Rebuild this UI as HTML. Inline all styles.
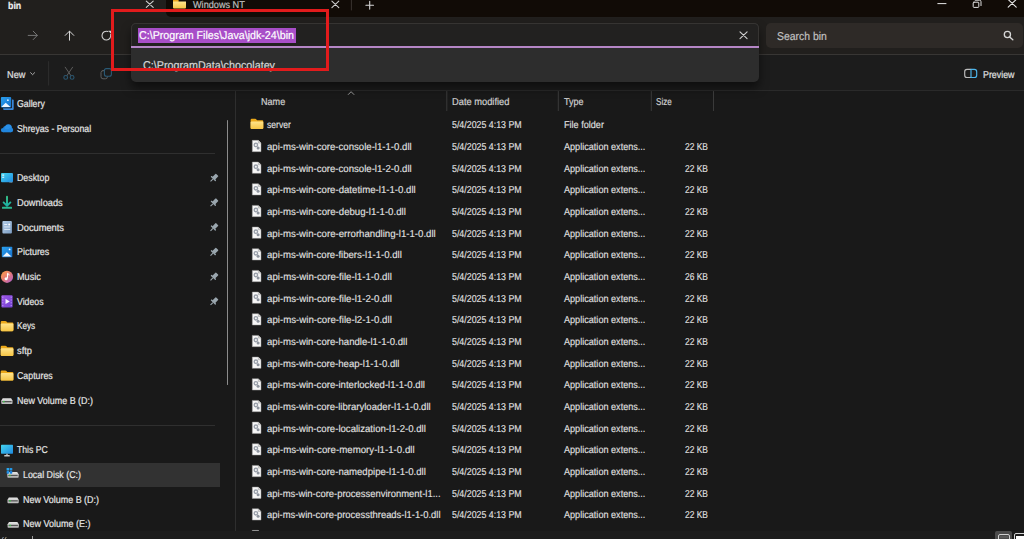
<!DOCTYPE html>
<html><head><meta charset="utf-8"><title>bin - File Explorer</title>
<style>
html,body{margin:0;padding:0;width:1024px;height:539px;overflow:hidden;background:#191919;}
body{position:relative;font-family:"Liberation Sans",sans-serif;}
.a{position:absolute;}
.t{position:absolute;line-height:12px;text-rendering:geometricPrecision;-webkit-text-stroke:0.2px currentColor;white-space:pre;transform-origin:0 0;font-family:"Liberation Sans",sans-serif;}
svg{position:absolute;left:0;top:0;overflow:visible;}
</style></head><body>
<!-- nav bar background (active tab + nav) -->
<div class="a" style="left:0;top:0;width:1024px;height:54px;background:#211f1d;"></div>
<!-- title bar dark region with flare -->
<div class="a" style="left:166px;top:0;width:858px;height:16.7px;background:#110b06;border-bottom-left-radius:5px;"></div>
<!-- nav separator -->
<div class="a" style="left:0;top:54px;width:1024px;height:1px;background:#383634;"></div>
<!-- toolbar -->
<div class="a" style="left:0;top:55px;width:1024px;height:35px;background:#1c1c1c;"></div>
<div class="a" style="left:0;top:90px;width:1024px;height:1px;background:#2a2a2a;"></div>
<!-- content bg -->
<div class="a" style="left:0;top:91px;width:1024px;height:440px;background:#191919;"></div>
<!-- sidebar border -->
<div class="a" style="left:235px;top:91px;width:1px;height:440px;background:#2e2e2e;"></div>
<!-- sidebar separators -->
<div class="a" style="left:0;top:152.8px;width:214.5px;height:1px;background:#2f2f2f;"></div>
<div class="a" style="left:0;top:425px;width:214.5px;height:1px;background:#2f2f2f;"></div>
<!-- sidebar scrollbar -->
<div class="a" style="left:226.8px;top:120.2px;width:1.4px;height:264.5px;background:#8c8c8c;border-radius:1px;"></div>
<!-- selected row -->
<div class="a" style="left:0;top:462.8px;width:220px;height:23.8px;background:#323232;"></div>

<!-- address box -->
<div class="a" style="left:131px;top:23px;width:627.5px;height:58.8px;background:#2d2d2d;border-radius:5px;box-shadow:0 6px 10px rgba(0,0,0,0.5);"></div>
<div class="a" style="left:131px;top:23px;width:625.5px;height:23px;background:#222120;border:1px solid #363432;border-bottom:none;border-radius:5px 5px 0 0;"></div>
<div class="a" style="left:131px;top:46px;width:627.5px;height:1.5px;background:#b586c6;"></div>
<div class="a" style="left:138.4px;top:27.9px;width:157.2px;height:14.7px;background:#a84ec8;"></div>
<!-- search box -->
<div class="a" style="left:765.5px;top:23.2px;width:257.7px;height:24.5px;background:#2e2a27;border-radius:5px;"></div>


<svg width="1024" height="539" viewBox="0 0 1024 539">
 <g fill="none" stroke-linecap="round" stroke-linejoin="round">
  <!-- tab close -->
  <path d="M146.3 1.1 L153.2 7.4 M153.2 1.1 L146.3 7.4" stroke="#d2d2d2" stroke-width="1.1"/>
  <path d="M331.9 1.2 L338.8 7.6 M338.8 1.2 L331.9 7.6" stroke="#cfcfcf" stroke-width="1.1"/>
  <path d="M351.4 0 L351.4 10" stroke="#3a3330" stroke-width="1"/>
  <path d="M365.9 5.2 L373.5 5.2 M369.7 1.2 L369.7 9.1" stroke="#d6d6d6" stroke-width="1.1"/>
  <!-- window controls -->
  <path d="M937.8 3.6 L946 3.6" stroke="#e6e6e6" stroke-width="1"/>
  <rect x="973.2" y="2.2" width="5.6" height="5.2" rx="0.8" stroke="#e0e0e0" stroke-width="1"/>
  <path d="M975.2 0.2 L979.5 0.2 Q981 0.2 981 1.7 L981 5.6" stroke="#e0e0e0" stroke-width="1"/>
  <path d="M1008.2 -0.5 L1016.2 7.2 M1016.2 -0.5 L1008.2 7.2" stroke="#e6e6e6" stroke-width="1.1"/>
  <!-- nav arrows -->
  <path d="M28.2 35.4 L37.2 35.4 M33.2 31.2 L37.3 35.4 L33.2 39.6" stroke="#767676" stroke-width="1"/>
  <path d="M69.5 31.2 L69.5 40.2 M65.2 35.4 L69.5 31.1 L73.8 35.4" stroke="#d8d8d8" stroke-width="1"/>
  <path d="M110.65 34.46 A4.4 4.4 0 1 1 107.9 31.47" stroke="#d0d0d0" stroke-width="1.1"/>
  <path d="M108.2 30.8 L111.2 30.8 L111.2 33.9 Z" fill="#d8d8d8" stroke="none"/>
  <!-- address clear -->
  <path d="M740 31.8 L747.1 38.7 M747.1 31.8 L740 38.7" stroke="#d2d2d2" stroke-width="1.1"/>
  <!-- search icon -->
  <circle cx="1007.4" cy="34.5" r="3.1" stroke="#d6d6d6" stroke-width="1.3"/>
  <path d="M1009.7 36.9 L1012.8 39.7" stroke="#d6d6d6" stroke-width="1.4"/>
  <!-- toolbar -->
  <path d="M30.6 72.7 L32.6 74.7 L34.6 72.7" stroke="#bdbdbd" stroke-width="0.9"/>
  <path d="M48.6 61.6 L48.6 85.1" stroke="#2e2e2e" stroke-width="1"/>
  <path d="M65.2 67.2 L70.9 75.6 M72.6 67.2 L66.9 75.6" stroke="#5c5c5c" stroke-width="1"/>
  <circle cx="65.7" cy="77.4" r="1.9" stroke="#2a5670" stroke-width="1.1"/>
  <circle cx="72.1" cy="77.4" r="1.9" stroke="#2a5670" stroke-width="1.1"/>
  <rect x="101" y="70.6" width="6.4" height="8.2" rx="2" stroke="#5e5e5e" stroke-width="1"/>
  <rect x="104.4" y="68.6" width="7" height="7.6" rx="2" fill="#1c1c1c" stroke="#2b5a76" stroke-width="1.1"/>
  <!-- preview icon -->
  <path d="M971 69.4 L967 69.4 Q964.7 69.4 964.7 71.7 L964.7 75.2 Q964.7 77.5 967 77.5 L971 77.5" stroke="#bdbdbd" stroke-width="1.15"/>
  <path d="M971 69.4 L974.4 69.4 Q976.7 69.4 976.7 71.7 L976.7 75.2 Q976.7 77.5 974.4 77.5 L971 77.5 Z" stroke="#4db6ec" stroke-width="1.15"/>
  <!-- sort chevron -->
  <path d="M348.3 94.5 L351.1 91.7 L353.9 94.5" stroke="#a0a0a0" stroke-width="0.9"/>
  <!-- column separators -->
  <path d="M446.8 91.5 L446.8 110.6 M558.3 91.5 L558.3 110.6 M651.3 91.5 L651.3 110.6 M713.5 91.5 L713.5 110.6" stroke="#3a3a3a" stroke-width="1"/>
 </g>
 <defs>
<linearGradient id="gfold" x1="0" y1="0" x2="0" y2="1"><stop offset="0" stop-color="#ffe48c"/><stop offset="1" stop-color="#f6c545"/></linearGradient>
<linearGradient id="gdesk" x1="0" y1="0" x2="1" y2="1"><stop offset="0" stop-color="#45d4ee"/><stop offset="1" stop-color="#1f8ae0"/></linearGradient>
<linearGradient id="gdl" x1="0" y1="0" x2="0" y2="1"><stop offset="0" stop-color="#36c48a"/><stop offset="1" stop-color="#1ab0a6"/></linearGradient>
<linearGradient id="gdoc" x1="0" y1="0" x2="1" y2="1"><stop offset="0" stop-color="#b4cce6"/><stop offset="1" stop-color="#7d9ec4"/></linearGradient>
<linearGradient id="gpic" x1="0" y1="0" x2="1" y2="1"><stop offset="0" stop-color="#2ba0ee"/><stop offset="1" stop-color="#1570cc"/></linearGradient>
<linearGradient id="gmus" x1="0.1" y1="0.1" x2="0.9" y2="0.9"><stop offset="0" stop-color="#fa9a4c"/><stop offset="0.5" stop-color="#e57a78"/><stop offset="1" stop-color="#b462c4"/></linearGradient>
<linearGradient id="gvid" x1="0" y1="0" x2="1" y2="1"><stop offset="0" stop-color="#a058e8"/><stop offset="1" stop-color="#7040d0"/></linearGradient>
<linearGradient id="gcloud" x1="0" y1="0" x2="0" y2="1"><stop offset="0" stop-color="#2a8ee4"/><stop offset="1" stop-color="#1a78d8"/></linearGradient>
<linearGradient id="gdrive" x1="0" y1="0" x2="0" y2="1"><stop offset="0" stop-color="#e4e4e4"/><stop offset="1" stop-color="#b8b8b8"/></linearGradient>
</defs>
<path d="M173 0 L178.6 0 L178.6 2 L173 2 Z" fill="#eaa51c"/><path d="M173 1.6 L186 1.6 L186 7.6 Q186 8.6 185 8.6 L174 8.6 Q173 8.6 173 7.6 Z" fill="url(#gfold)"/>
<g transform="translate(0.90,97.10)"><rect x="2.2" y="2.3" width="10.6" height="10.6" rx="1" fill="#3a86d6"/><rect x="-0.5" y="-0.5" width="11.6" height="11.7" rx="1" fill="#191919"/><rect x="0" y="0" width="10.3" height="10.4" rx="1" fill="url(#gpic)"/><path d="M0.4 9.8 L4.8 5.6 L9.6 9.8 Z" fill="#eef6ff"/><circle cx="7" cy="3.1" r="0.9" fill="#e0f0ff"/></g>
<g transform="translate(0.80,124.00)"><circle cx="2.3" cy="6.1" r="2.2" fill="#2186de"/><circle cx="4.8" cy="4.6" r="2.5" fill="#2186de"/><circle cx="7.6" cy="3.7" r="3.5" fill="#2a8fe6"/><circle cx="10.1" cy="6" r="2.3" fill="#2186de"/><rect x="2.3" y="5" width="7.8" height="3.3" fill="#2186de"/></g>
<g transform="translate(1.00,173.00)"><rect x="0" y="0" width="12" height="9.2" rx="1" fill="url(#gdesk)"/><rect x="1.2" y="1.5" width="2" height="1.2" fill="#e8fbff"/><rect x="1.2" y="3.7" width="2" height="1.2" fill="#d0f0ff"/><rect x="8.6" y="8.7" width="1" height="1" fill="#8ab"/><rect x="10.3" y="8.7" width="1" height="1" fill="#8ab"/></g>
<g transform="translate(2.00,196.20)"><path d="M5 0.6 L5 9.4 M1.6 6.2 L5 9.6 L8.4 6.2" fill="none" stroke="url(#gdl)" stroke-width="1.9" stroke-linecap="round" stroke-linejoin="round"/><rect x="0" y="10.6" width="10" height="2" rx="0.6" fill="#2bb890"/></g>
<g transform="translate(2.40,220.90)"><rect x="0" y="0" width="9.5" height="12.6" rx="1" fill="url(#gdoc)"/><rect x="1.8" y="3.2" width="3" height="0.9" fill="#f0f6ff"/><rect x="1.8" y="5.6" width="6" height="0.9" fill="#e8f0fa"/><rect x="1.8" y="8" width="6" height="0.9" fill="#e8f0fa"/><circle cx="6.8" cy="3.6" r="1" fill="#ffffff"/></g>
<g transform="translate(1.80,246.80)"><rect x="0" y="0" width="10.5" height="10.4" rx="0.8" fill="url(#gpic)"/><path d="M0.8 9.8 L5 5.4 L9.7 9.8 Z" fill="#f2f8ff"/><circle cx="7.8" cy="2.6" r="0.9" fill="#e8f4ff"/></g>
<g transform="translate(0.90,270.60)"><circle cx="6.1" cy="6.2" r="6.1" fill="url(#gmus)"/><path d="M6.6 2.6 L6.6 7.8" stroke="#fff" stroke-width="1.1"/><path d="M6.6 2.6 Q8.4 3.4 8.2 4.8" stroke="#fff" stroke-width="1" fill="none"/><circle cx="5.2" cy="8.1" r="1.5" fill="#fff"/></g>
<g transform="translate(1.40,295.20)"><rect x="0" y="0" width="11.2" height="12.4" rx="1" fill="url(#gvid)"/><rect x="0.9" y="1.5" width="1" height="1" fill="#c9a8ff"/><rect x="0.9" y="4.3" width="1" height="1" fill="#c9a8ff"/><rect x="0.9" y="7.1" width="1" height="1" fill="#c9a8ff"/><rect x="0.9" y="9.9" width="1" height="1" fill="#c9a8ff"/><rect x="9.3" y="1.5" width="1" height="1" fill="#c9a8ff"/><rect x="9.3" y="4.3" width="1" height="1" fill="#c9a8ff"/><rect x="9.3" y="7.1" width="1" height="1" fill="#c9a8ff"/><rect x="9.3" y="9.9" width="1" height="1" fill="#c9a8ff"/><path d="M4.1 3.6 L8.4 6.2 L4.1 8.8 Z" fill="#f4eeff"/></g>
<g transform="translate(0.70,321.00)"><g transform="scale(1.000,1.000)"><path d="M0 1.2 Q0 0 1.2 0 L4.6 0 Q5.3 0 5.8 0.6 L6.6 1.5 L11.6 1.5 Q12.7 1.5 12.7 2.6 L12.7 9 Q12.7 10.2 11.5 10.2 L1.2 10.2 Q0 10.2 0 9 Z" fill="#eba81a"/><path d="M0 3.6 Q0 2.6 1 2.6 L11.7 2.6 Q12.7 2.6 12.7 3.6 L12.7 9.1 Q12.7 10.2 11.6 10.2 L1.1 10.2 Q0 10.2 0 9.1 Z" fill="url(#gfold)"/></g></g>
<g transform="translate(0.70,345.70)"><g transform="scale(1.000,1.000)"><path d="M0 1.2 Q0 0 1.2 0 L4.6 0 Q5.3 0 5.8 0.6 L6.6 1.5 L11.6 1.5 Q12.7 1.5 12.7 2.6 L12.7 9 Q12.7 10.2 11.5 10.2 L1.2 10.2 Q0 10.2 0 9 Z" fill="#eba81a"/><path d="M0 3.6 Q0 2.6 1 2.6 L11.7 2.6 Q12.7 2.6 12.7 3.6 L12.7 9.1 Q12.7 10.2 11.6 10.2 L1.1 10.2 Q0 10.2 0 9.1 Z" fill="url(#gfold)"/></g></g>
<g transform="translate(0.70,370.40)"><g transform="scale(1.000,1.000)"><path d="M0 1.2 Q0 0 1.2 0 L4.6 0 Q5.3 0 5.8 0.6 L6.6 1.5 L11.6 1.5 Q12.7 1.5 12.7 2.6 L12.7 9 Q12.7 10.2 11.5 10.2 L1.2 10.2 Q0 10.2 0 9 Z" fill="#eba81a"/><path d="M0 3.6 Q0 2.6 1 2.6 L11.7 2.6 Q12.7 2.6 12.7 3.6 L12.7 9.1 Q12.7 10.2 11.6 10.2 L1.1 10.2 Q0 10.2 0 9.1 Z" fill="url(#gfold)"/></g></g>
<g transform="translate(1.30,397.90)"><path d="M1.4 0.3 L9.8 0.3 L11.2 2.6 L11.2 5.4 Q11.2 6.1 10.5 6.1 L0.7 6.1 Q0 6.1 0 5.4 L0 2.6 Z" fill="url(#gdrive)"/><rect x="0.9" y="3.1" width="9.4" height="1.3" fill="#555"/><rect x="1.8" y="3.0" width="1.4" height="1.5" fill="#3cc84a"/></g>
<g transform="translate(1.00,444.80)"><rect x="0" y="0" width="12" height="8.9" rx="0.6" fill="url(#gdesk)"/><rect x="5.2" y="8.9" width="1.6" height="1.4" fill="#b0b0b0"/><rect x="3.2" y="10.3" width="5.6" height="1.3" rx="0.5" fill="#c8c8c8"/></g>
<g transform="translate(6.80,468.00)"><g transform="translate(0.6,3.7)"><path d="M1.4 0.3 L9.8 0.3 L11.2 2.6 L11.2 5.4 Q11.2 6.1 10.5 6.1 L0.7 6.1 Q0 6.1 0 5.4 L0 2.6 Z" fill="url(#gdrive)"/><rect x="0.9" y="3.1" width="9.4" height="1.3" fill="#555"/><rect x="1.8" y="3.0" width="1.4" height="1.5" fill="#3cc84a"/></g><rect x="-0.2" y="0" width="2.6" height="2.6" rx="0.6" fill="#29a8f0"/><rect x="2.9" y="0" width="2.6" height="2.6" rx="0.6" fill="#2298e8"/><rect x="-0.2" y="3.1" width="2.6" height="2.6" rx="0.6" fill="#1e90e8"/><rect x="2.9" y="3.1" width="2.6" height="2.6" rx="0.6" fill="#1a80e0"/></g>
<g transform="translate(7.50,497.10)"><path d="M1.4 0.3 L9.8 0.3 L11.2 2.6 L11.2 5.4 Q11.2 6.1 10.5 6.1 L0.7 6.1 Q0 6.1 0 5.4 L0 2.6 Z" fill="url(#gdrive)"/><rect x="0.9" y="3.1" width="9.4" height="1.3" fill="#555"/><rect x="1.8" y="3.0" width="1.4" height="1.5" fill="#3cc84a"/></g>
<g transform="translate(7.60,521.70)"><path d="M1.4 0.3 L9.8 0.3 L11.2 2.6 L11.2 5.4 Q11.2 6.1 10.5 6.1 L0.7 6.1 Q0 6.1 0 5.4 L0 2.6 Z" fill="url(#gdrive)"/><rect x="0.9" y="3.1" width="9.4" height="1.3" fill="#555"/><rect x="1.8" y="3.0" width="1.4" height="1.5" fill="#3cc84a"/></g>
<g transform="translate(209.70,173.60)"><g transform="rotate(45 4.5 4.2)"><rect x="2.6" y="0" width="3.8" height="5.2" rx="0.6" fill="#9aa6ae"/><rect x="1.2" y="4.6" width="6.6" height="1.4" rx="0.5" fill="#9aa6ae"/><path d="M4.5 6 L4.5 9.4" stroke="#9aa6ae" stroke-width="1.1"/></g></g>
<g transform="translate(209.70,198.30)"><g transform="rotate(45 4.5 4.2)"><rect x="2.6" y="0" width="3.8" height="5.2" rx="0.6" fill="#9aa6ae"/><rect x="1.2" y="4.6" width="6.6" height="1.4" rx="0.5" fill="#9aa6ae"/><path d="M4.5 6 L4.5 9.4" stroke="#9aa6ae" stroke-width="1.1"/></g></g>
<g transform="translate(209.70,223.00)"><g transform="rotate(45 4.5 4.2)"><rect x="2.6" y="0" width="3.8" height="5.2" rx="0.6" fill="#9aa6ae"/><rect x="1.2" y="4.6" width="6.6" height="1.4" rx="0.5" fill="#9aa6ae"/><path d="M4.5 6 L4.5 9.4" stroke="#9aa6ae" stroke-width="1.1"/></g></g>
<g transform="translate(209.70,247.70)"><g transform="rotate(45 4.5 4.2)"><rect x="2.6" y="0" width="3.8" height="5.2" rx="0.6" fill="#9aa6ae"/><rect x="1.2" y="4.6" width="6.6" height="1.4" rx="0.5" fill="#9aa6ae"/><path d="M4.5 6 L4.5 9.4" stroke="#9aa6ae" stroke-width="1.1"/></g></g>
<g transform="translate(209.70,272.40)"><g transform="rotate(45 4.5 4.2)"><rect x="2.6" y="0" width="3.8" height="5.2" rx="0.6" fill="#9aa6ae"/><rect x="1.2" y="4.6" width="6.6" height="1.4" rx="0.5" fill="#9aa6ae"/><path d="M4.5 6 L4.5 9.4" stroke="#9aa6ae" stroke-width="1.1"/></g></g>
<g transform="translate(209.70,297.10)"><g transform="rotate(45 4.5 4.2)"><rect x="2.6" y="0" width="3.8" height="5.2" rx="0.6" fill="#9aa6ae"/><rect x="1.2" y="4.6" width="6.6" height="1.4" rx="0.5" fill="#9aa6ae"/><path d="M4.5 6 L4.5 9.4" stroke="#9aa6ae" stroke-width="1.1"/></g></g>
<g transform="translate(250.60,118.80)"><g transform="scale(1.000,1.000)"><path d="M0 1.2 Q0 0 1.2 0 L4.6 0 Q5.3 0 5.8 0.6 L6.6 1.5 L11.6 1.5 Q12.7 1.5 12.7 2.6 L12.7 9 Q12.7 10.2 11.5 10.2 L1.2 10.2 Q0 10.2 0 9 Z" fill="#eba81a"/><path d="M0 3.6 Q0 2.6 1 2.6 L11.7 2.6 Q12.7 2.6 12.7 3.6 L12.7 9.1 Q12.7 10.2 11.6 10.2 L1.1 10.2 Q0 10.2 0 9.1 Z" fill="url(#gfold)"/></g></g>
<g transform="translate(252.00,140.07)"><path d="M0.3 0.3 L6.3 0.3 L9 3 L9 11.6 L0.3 11.6 Z" fill="#f7f7f7" stroke="#9a9a9a" stroke-width="0.5"/><path d="M6.3 0.3 L6.3 3 L9 3" fill="#d8d8d8" stroke="#9a9a9a" stroke-width="0.5"/><circle cx="3.9" cy="4.9" r="1.7" fill="none" stroke="#9aa0aa" stroke-width="1.4"/><circle cx="6.1" cy="7.9" r="1.5" fill="#8e949e"/></g>
<g transform="translate(252.00,161.74)"><path d="M0.3 0.3 L6.3 0.3 L9 3 L9 11.6 L0.3 11.6 Z" fill="#f7f7f7" stroke="#9a9a9a" stroke-width="0.5"/><path d="M6.3 0.3 L6.3 3 L9 3" fill="#d8d8d8" stroke="#9a9a9a" stroke-width="0.5"/><circle cx="3.9" cy="4.9" r="1.7" fill="none" stroke="#9aa0aa" stroke-width="1.4"/><circle cx="6.1" cy="7.9" r="1.5" fill="#8e949e"/></g>
<g transform="translate(252.00,183.41)"><path d="M0.3 0.3 L6.3 0.3 L9 3 L9 11.6 L0.3 11.6 Z" fill="#f7f7f7" stroke="#9a9a9a" stroke-width="0.5"/><path d="M6.3 0.3 L6.3 3 L9 3" fill="#d8d8d8" stroke="#9a9a9a" stroke-width="0.5"/><circle cx="3.9" cy="4.9" r="1.7" fill="none" stroke="#9aa0aa" stroke-width="1.4"/><circle cx="6.1" cy="7.9" r="1.5" fill="#8e949e"/></g>
<g transform="translate(252.00,205.08)"><path d="M0.3 0.3 L6.3 0.3 L9 3 L9 11.6 L0.3 11.6 Z" fill="#f7f7f7" stroke="#9a9a9a" stroke-width="0.5"/><path d="M6.3 0.3 L6.3 3 L9 3" fill="#d8d8d8" stroke="#9a9a9a" stroke-width="0.5"/><circle cx="3.9" cy="4.9" r="1.7" fill="none" stroke="#9aa0aa" stroke-width="1.4"/><circle cx="6.1" cy="7.9" r="1.5" fill="#8e949e"/></g>
<g transform="translate(252.00,226.75)"><path d="M0.3 0.3 L6.3 0.3 L9 3 L9 11.6 L0.3 11.6 Z" fill="#f7f7f7" stroke="#9a9a9a" stroke-width="0.5"/><path d="M6.3 0.3 L6.3 3 L9 3" fill="#d8d8d8" stroke="#9a9a9a" stroke-width="0.5"/><circle cx="3.9" cy="4.9" r="1.7" fill="none" stroke="#9aa0aa" stroke-width="1.4"/><circle cx="6.1" cy="7.9" r="1.5" fill="#8e949e"/></g>
<g transform="translate(252.00,248.42)"><path d="M0.3 0.3 L6.3 0.3 L9 3 L9 11.6 L0.3 11.6 Z" fill="#f7f7f7" stroke="#9a9a9a" stroke-width="0.5"/><path d="M6.3 0.3 L6.3 3 L9 3" fill="#d8d8d8" stroke="#9a9a9a" stroke-width="0.5"/><circle cx="3.9" cy="4.9" r="1.7" fill="none" stroke="#9aa0aa" stroke-width="1.4"/><circle cx="6.1" cy="7.9" r="1.5" fill="#8e949e"/></g>
<g transform="translate(252.00,270.09)"><path d="M0.3 0.3 L6.3 0.3 L9 3 L9 11.6 L0.3 11.6 Z" fill="#f7f7f7" stroke="#9a9a9a" stroke-width="0.5"/><path d="M6.3 0.3 L6.3 3 L9 3" fill="#d8d8d8" stroke="#9a9a9a" stroke-width="0.5"/><circle cx="3.9" cy="4.9" r="1.7" fill="none" stroke="#9aa0aa" stroke-width="1.4"/><circle cx="6.1" cy="7.9" r="1.5" fill="#8e949e"/></g>
<g transform="translate(252.00,291.76)"><path d="M0.3 0.3 L6.3 0.3 L9 3 L9 11.6 L0.3 11.6 Z" fill="#f7f7f7" stroke="#9a9a9a" stroke-width="0.5"/><path d="M6.3 0.3 L6.3 3 L9 3" fill="#d8d8d8" stroke="#9a9a9a" stroke-width="0.5"/><circle cx="3.9" cy="4.9" r="1.7" fill="none" stroke="#9aa0aa" stroke-width="1.4"/><circle cx="6.1" cy="7.9" r="1.5" fill="#8e949e"/></g>
<g transform="translate(252.00,313.43)"><path d="M0.3 0.3 L6.3 0.3 L9 3 L9 11.6 L0.3 11.6 Z" fill="#f7f7f7" stroke="#9a9a9a" stroke-width="0.5"/><path d="M6.3 0.3 L6.3 3 L9 3" fill="#d8d8d8" stroke="#9a9a9a" stroke-width="0.5"/><circle cx="3.9" cy="4.9" r="1.7" fill="none" stroke="#9aa0aa" stroke-width="1.4"/><circle cx="6.1" cy="7.9" r="1.5" fill="#8e949e"/></g>
<g transform="translate(252.00,335.10)"><path d="M0.3 0.3 L6.3 0.3 L9 3 L9 11.6 L0.3 11.6 Z" fill="#f7f7f7" stroke="#9a9a9a" stroke-width="0.5"/><path d="M6.3 0.3 L6.3 3 L9 3" fill="#d8d8d8" stroke="#9a9a9a" stroke-width="0.5"/><circle cx="3.9" cy="4.9" r="1.7" fill="none" stroke="#9aa0aa" stroke-width="1.4"/><circle cx="6.1" cy="7.9" r="1.5" fill="#8e949e"/></g>
<g transform="translate(252.00,356.77)"><path d="M0.3 0.3 L6.3 0.3 L9 3 L9 11.6 L0.3 11.6 Z" fill="#f7f7f7" stroke="#9a9a9a" stroke-width="0.5"/><path d="M6.3 0.3 L6.3 3 L9 3" fill="#d8d8d8" stroke="#9a9a9a" stroke-width="0.5"/><circle cx="3.9" cy="4.9" r="1.7" fill="none" stroke="#9aa0aa" stroke-width="1.4"/><circle cx="6.1" cy="7.9" r="1.5" fill="#8e949e"/></g>
<g transform="translate(252.00,378.44)"><path d="M0.3 0.3 L6.3 0.3 L9 3 L9 11.6 L0.3 11.6 Z" fill="#f7f7f7" stroke="#9a9a9a" stroke-width="0.5"/><path d="M6.3 0.3 L6.3 3 L9 3" fill="#d8d8d8" stroke="#9a9a9a" stroke-width="0.5"/><circle cx="3.9" cy="4.9" r="1.7" fill="none" stroke="#9aa0aa" stroke-width="1.4"/><circle cx="6.1" cy="7.9" r="1.5" fill="#8e949e"/></g>
<g transform="translate(252.00,400.11)"><path d="M0.3 0.3 L6.3 0.3 L9 3 L9 11.6 L0.3 11.6 Z" fill="#f7f7f7" stroke="#9a9a9a" stroke-width="0.5"/><path d="M6.3 0.3 L6.3 3 L9 3" fill="#d8d8d8" stroke="#9a9a9a" stroke-width="0.5"/><circle cx="3.9" cy="4.9" r="1.7" fill="none" stroke="#9aa0aa" stroke-width="1.4"/><circle cx="6.1" cy="7.9" r="1.5" fill="#8e949e"/></g>
<g transform="translate(252.00,421.78)"><path d="M0.3 0.3 L6.3 0.3 L9 3 L9 11.6 L0.3 11.6 Z" fill="#f7f7f7" stroke="#9a9a9a" stroke-width="0.5"/><path d="M6.3 0.3 L6.3 3 L9 3" fill="#d8d8d8" stroke="#9a9a9a" stroke-width="0.5"/><circle cx="3.9" cy="4.9" r="1.7" fill="none" stroke="#9aa0aa" stroke-width="1.4"/><circle cx="6.1" cy="7.9" r="1.5" fill="#8e949e"/></g>
<g transform="translate(252.00,443.45)"><path d="M0.3 0.3 L6.3 0.3 L9 3 L9 11.6 L0.3 11.6 Z" fill="#f7f7f7" stroke="#9a9a9a" stroke-width="0.5"/><path d="M6.3 0.3 L6.3 3 L9 3" fill="#d8d8d8" stroke="#9a9a9a" stroke-width="0.5"/><circle cx="3.9" cy="4.9" r="1.7" fill="none" stroke="#9aa0aa" stroke-width="1.4"/><circle cx="6.1" cy="7.9" r="1.5" fill="#8e949e"/></g>
<g transform="translate(252.00,465.12)"><path d="M0.3 0.3 L6.3 0.3 L9 3 L9 11.6 L0.3 11.6 Z" fill="#f7f7f7" stroke="#9a9a9a" stroke-width="0.5"/><path d="M6.3 0.3 L6.3 3 L9 3" fill="#d8d8d8" stroke="#9a9a9a" stroke-width="0.5"/><circle cx="3.9" cy="4.9" r="1.7" fill="none" stroke="#9aa0aa" stroke-width="1.4"/><circle cx="6.1" cy="7.9" r="1.5" fill="#8e949e"/></g>
<g transform="translate(252.00,486.79)"><path d="M0.3 0.3 L6.3 0.3 L9 3 L9 11.6 L0.3 11.6 Z" fill="#f7f7f7" stroke="#9a9a9a" stroke-width="0.5"/><path d="M6.3 0.3 L6.3 3 L9 3" fill="#d8d8d8" stroke="#9a9a9a" stroke-width="0.5"/><circle cx="3.9" cy="4.9" r="1.7" fill="none" stroke="#9aa0aa" stroke-width="1.4"/><circle cx="6.1" cy="7.9" r="1.5" fill="#8e949e"/></g>
<g transform="translate(252.00,508.46)"><path d="M0.3 0.3 L6.3 0.3 L9 3 L9 11.6 L0.3 11.6 Z" fill="#f7f7f7" stroke="#9a9a9a" stroke-width="0.5"/><path d="M6.3 0.3 L6.3 3 L9 3" fill="#d8d8d8" stroke="#9a9a9a" stroke-width="0.5"/><circle cx="3.9" cy="4.9" r="1.7" fill="none" stroke="#9aa0aa" stroke-width="1.4"/><circle cx="6.1" cy="7.9" r="1.5" fill="#8e949e"/></g>
<g transform="translate(252.00,530.13)"><path d="M0.3 0.3 L6.3 0.3 L9 3 L9 11.6 L0.3 11.6 Z" fill="#f7f7f7" stroke="#9a9a9a" stroke-width="0.5"/><path d="M6.3 0.3 L6.3 3 L9 3" fill="#d8d8d8" stroke="#9a9a9a" stroke-width="0.5"/><circle cx="3.9" cy="4.9" r="1.7" fill="none" stroke="#9aa0aa" stroke-width="1.4"/><circle cx="6.1" cy="7.9" r="1.5" fill="#8e949e"/></g>
</svg>
<!-- status bar -->
<div class="a" style="left:0;top:531px;width:1024px;height:8px;background:#1c1c1c;"></div>
<!-- status bar bits -->
<div class="a" style="left:31.6px;top:535.8px;width:1.2px;height:4px;background:#9a9a9a;"></div>
<div class="a" style="left:2.2px;top:536.5px;width:1.4px;height:3px;background:#8a9ab0;transform:skewX(-30deg);"></div>
<div class="a" style="left:4.6px;top:537.2px;width:1.4px;height:2.5px;background:#b0a080;transform:skewX(-30deg);"></div>
<!-- view buttons -->
<div class="a" style="left:994.5px;top:530.9px;width:17.3px;height:10px;background:#4b4b4b;border-radius:2px;"></div>
<div class="a" style="left:997.9px;top:534.3px;width:10px;height:8px;border:1px solid #cfcfcf;border-radius:2px;"></div>
<div class="a" style="left:999.7px;top:536.2px;width:8.4px;height:1.6px;background:#5a5a5a;"></div>
<div class="a" style="left:1013.9px;top:533.4px;width:12px;height:8px;border:1.2px solid #d6d6d6;border-radius:2px;"></div>
<div class="a" style="left:1016.3px;top:535.6px;width:10px;height:6px;background:#ffffff;"></div>
<div class="t" style="left:7.80px;top:1px;font-size:10px;color:#f0f0f0;font-weight:700;transform:scaleX(0.8800)">bin</div>
<div class="t" style="left:193.20px;top:0px;font-size:10px;color:#bebebe;transform:scaleX(0.9138)">Windows NT</div>
<div class="t" style="left:139.00px;top:30px;font-size:11.3px;color:#ffffff;transform:scaleX(0.9458)">C:\Program Files\Java\jdk-24\bin</div>
<div class="t" style="left:142.50px;top:60px;font-size:11.3px;color:#d6d6d6;transform:scaleX(0.9512)">C:\ProgramData\chocolatey</div>
<div class="t" style="left:776.70px;top:31px;font-size:11.3px;color:#c0c0c0;transform:scaleX(0.9220)">Search bin</div>
<div class="t" style="left:7.00px;top:70px;font-size:10px;color:#e0e0e0;transform:scaleX(0.9193)">New</div>
<div class="t" style="left:983.20px;top:70px;font-size:10px;color:#e0e0e0;transform:scaleX(0.8854)">Preview</div>
<div class="t" style="left:17.30px;top:99px;font-size:10px;color:#e6e6e6;transform:scaleX(0.8773)">Gallery</div>
<div class="t" style="left:17.30px;top:124px;font-size:10px;color:#e6e6e6;transform:scaleX(0.8713)">Shreyas - Personal</div>
<div class="t" style="left:17.30px;top:173px;font-size:10px;color:#e6e6e6;transform:scaleX(0.8804)">Desktop</div>
<div class="t" style="left:17.30px;top:198px;font-size:10px;color:#e6e6e6;transform:scaleX(0.9235)">Downloads</div>
<div class="t" style="left:17.30px;top:223px;font-size:10px;color:#e6e6e6;transform:scaleX(0.9293)">Documents</div>
<div class="t" style="left:17.30px;top:247px;font-size:10px;color:#e6e6e6;transform:scaleX(0.8941)">Pictures</div>
<div class="t" style="left:17.30px;top:272px;font-size:10px;color:#e6e6e6;transform:scaleX(0.9110)">Music</div>
<div class="t" style="left:17.30px;top:297px;font-size:10px;color:#e6e6e6;transform:scaleX(0.8715)">Videos</div>
<div class="t" style="left:17.30px;top:321px;font-size:10px;color:#e6e6e6;transform:scaleX(0.8186)">Keys</div>
<div class="t" style="left:17.30px;top:346px;font-size:10px;color:#e6e6e6;transform:scaleX(0.9302)">sftp</div>
<div class="t" style="left:17.30px;top:371px;font-size:10px;color:#e6e6e6;transform:scaleX(0.8798)">Captures</div>
<div class="t" style="left:17.30px;top:396px;font-size:10px;color:#e6e6e6;transform:scaleX(0.8938)">New Volume B (D:)</div>
<div class="t" style="left:17.30px;top:445px;font-size:10px;color:#e6e6e6;transform:scaleX(0.8633)">This PC</div>
<div class="t" style="left:23.40px;top:470px;font-size:10px;color:#e6e6e6;transform:scaleX(0.8844)">Local Disk (C:)</div>
<div class="t" style="left:23.40px;top:495px;font-size:10px;color:#e6e6e6;transform:scaleX(0.8938)">New Volume B (D:)</div>
<div class="t" style="left:23.40px;top:519px;font-size:10px;color:#e6e6e6;transform:scaleX(0.8983)">New Volume (E:)</div>
<div class="t" style="left:260.60px;top:97px;font-size:10px;color:#d0d0d0;transform:scaleX(0.9068)">Name</div>
<div class="t" style="left:452.30px;top:97px;font-size:10px;color:#d0d0d0;transform:scaleX(0.9303)">Date modified</div>
<div class="t" style="left:564.10px;top:97px;font-size:10px;color:#d0d0d0;transform:scaleX(0.9000)">Type</div>
<div class="t" style="left:656.30px;top:97px;font-size:10px;color:#d0d0d0;transform:scaleX(0.8071)">Size</div>
<div class="t" style="left:266.70px;top:120px;font-size:10px;color:#dedede;transform:scaleX(0.8598)">server</div>
<div class="t" style="left:452.30px;top:120px;font-size:10px;color:#dedede;transform:scaleX(0.8828)">5/4/2025 4:13 PM</div>
<div class="t" style="left:564.10px;top:120px;font-size:10px;color:#dedede;transform:scaleX(0.9088)">File folder</div>
<div class="t" style="left:266.70px;top:142px;font-size:10px;color:#dedede;transform:scaleX(0.9608)">api-ms-win-core-console-l1-1-0.dll</div>
<div class="t" style="left:452.30px;top:142px;font-size:10px;color:#dedede;transform:scaleX(0.8828)">5/4/2025 4:13 PM</div>
<div class="t" style="left:564.10px;top:142px;font-size:10px;color:#dedede;transform:scaleX(0.9095)">Application extens...</div>
<div class="t" style="left:684.50px;top:142px;font-size:10px;color:#dedede;transform:scaleX(0.8404)">22 KB</div>
<div class="t" style="left:266.70px;top:164px;font-size:10px;color:#dedede;transform:scaleX(0.9608)">api-ms-win-core-console-l1-2-0.dll</div>
<div class="t" style="left:452.30px;top:164px;font-size:10px;color:#dedede;transform:scaleX(0.8828)">5/4/2025 4:13 PM</div>
<div class="t" style="left:564.10px;top:164px;font-size:10px;color:#dedede;transform:scaleX(0.9095)">Application extens...</div>
<div class="t" style="left:684.50px;top:164px;font-size:10px;color:#dedede;transform:scaleX(0.8404)">22 KB</div>
<div class="t" style="left:266.70px;top:185px;font-size:10px;color:#dedede;transform:scaleX(0.9625)">api-ms-win-core-datetime-l1-1-0.dll</div>
<div class="t" style="left:452.30px;top:185px;font-size:10px;color:#dedede;transform:scaleX(0.8828)">5/4/2025 4:13 PM</div>
<div class="t" style="left:564.10px;top:185px;font-size:10px;color:#dedede;transform:scaleX(0.9095)">Application extens...</div>
<div class="t" style="left:684.50px;top:185px;font-size:10px;color:#dedede;transform:scaleX(0.8404)">22 KB</div>
<div class="t" style="left:266.70px;top:207px;font-size:10px;color:#dedede;transform:scaleX(0.9642)">api-ms-win-core-debug-l1-1-0.dll</div>
<div class="t" style="left:452.30px;top:207px;font-size:10px;color:#dedede;transform:scaleX(0.8828)">5/4/2025 4:13 PM</div>
<div class="t" style="left:564.10px;top:207px;font-size:10px;color:#dedede;transform:scaleX(0.9095)">Application extens...</div>
<div class="t" style="left:684.50px;top:207px;font-size:10px;color:#dedede;transform:scaleX(0.8404)">22 KB</div>
<div class="t" style="left:266.70px;top:229px;font-size:10px;color:#dedede;transform:scaleX(0.9637)">api-ms-win-core-errorhandling-l1-1-0.dll</div>
<div class="t" style="left:452.30px;top:229px;font-size:10px;color:#dedede;transform:scaleX(0.8828)">5/4/2025 4:13 PM</div>
<div class="t" style="left:564.10px;top:229px;font-size:10px;color:#dedede;transform:scaleX(0.9095)">Application extens...</div>
<div class="t" style="left:684.50px;top:229px;font-size:10px;color:#dedede;transform:scaleX(0.8404)">22 KB</div>
<div class="t" style="left:266.70px;top:250px;font-size:10px;color:#dedede;transform:scaleX(0.9588)">api-ms-win-core-fibers-l1-1-0.dll</div>
<div class="t" style="left:452.30px;top:250px;font-size:10px;color:#dedede;transform:scaleX(0.8828)">5/4/2025 4:13 PM</div>
<div class="t" style="left:564.10px;top:250px;font-size:10px;color:#dedede;transform:scaleX(0.9095)">Application extens...</div>
<div class="t" style="left:684.50px;top:250px;font-size:10px;color:#dedede;transform:scaleX(0.8404)">22 KB</div>
<div class="t" style="left:266.70px;top:272px;font-size:10px;color:#dedede;transform:scaleX(0.9680)">api-ms-win-core-file-l1-1-0.dll</div>
<div class="t" style="left:452.30px;top:272px;font-size:10px;color:#dedede;transform:scaleX(0.8828)">5/4/2025 4:13 PM</div>
<div class="t" style="left:564.10px;top:272px;font-size:10px;color:#dedede;transform:scaleX(0.9095)">Application extens...</div>
<div class="t" style="left:684.50px;top:272px;font-size:10px;color:#dedede;transform:scaleX(0.8404)">26 KB</div>
<div class="t" style="left:266.70px;top:294px;font-size:10px;color:#dedede;transform:scaleX(0.9680)">api-ms-win-core-file-l1-2-0.dll</div>
<div class="t" style="left:452.30px;top:294px;font-size:10px;color:#dedede;transform:scaleX(0.8828)">5/4/2025 4:13 PM</div>
<div class="t" style="left:564.10px;top:294px;font-size:10px;color:#dedede;transform:scaleX(0.9095)">Application extens...</div>
<div class="t" style="left:684.50px;top:294px;font-size:10px;color:#dedede;transform:scaleX(0.8404)">22 KB</div>
<div class="t" style="left:266.70px;top:315px;font-size:10px;color:#dedede;transform:scaleX(0.9680)">api-ms-win-core-file-l2-1-0.dll</div>
<div class="t" style="left:452.30px;top:315px;font-size:10px;color:#dedede;transform:scaleX(0.8828)">5/4/2025 4:13 PM</div>
<div class="t" style="left:564.10px;top:315px;font-size:10px;color:#dedede;transform:scaleX(0.9095)">Application extens...</div>
<div class="t" style="left:684.50px;top:315px;font-size:10px;color:#dedede;transform:scaleX(0.8404)">22 KB</div>
<div class="t" style="left:266.70px;top:337px;font-size:10px;color:#dedede;transform:scaleX(0.9598)">api-ms-win-core-handle-l1-1-0.dll</div>
<div class="t" style="left:452.30px;top:337px;font-size:10px;color:#dedede;transform:scaleX(0.8828)">5/4/2025 4:13 PM</div>
<div class="t" style="left:564.10px;top:337px;font-size:10px;color:#dedede;transform:scaleX(0.9095)">Application extens...</div>
<div class="t" style="left:684.50px;top:337px;font-size:10px;color:#dedede;transform:scaleX(0.8404)">22 KB</div>
<div class="t" style="left:266.70px;top:359px;font-size:10px;color:#dedede;transform:scaleX(0.9574)">api-ms-win-core-heap-l1-1-0.dll</div>
<div class="t" style="left:452.30px;top:359px;font-size:10px;color:#dedede;transform:scaleX(0.8828)">5/4/2025 4:13 PM</div>
<div class="t" style="left:564.10px;top:359px;font-size:10px;color:#dedede;transform:scaleX(0.9095)">Application extens...</div>
<div class="t" style="left:684.50px;top:359px;font-size:10px;color:#dedede;transform:scaleX(0.8404)">22 KB</div>
<div class="t" style="left:266.70px;top:380px;font-size:10px;color:#dedede;transform:scaleX(0.9599)">api-ms-win-core-interlocked-l1-1-0.dll</div>
<div class="t" style="left:452.30px;top:380px;font-size:10px;color:#dedede;transform:scaleX(0.8828)">5/4/2025 4:13 PM</div>
<div class="t" style="left:564.10px;top:380px;font-size:10px;color:#dedede;transform:scaleX(0.9095)">Application extens...</div>
<div class="t" style="left:684.50px;top:380px;font-size:10px;color:#dedede;transform:scaleX(0.8404)">22 KB</div>
<div class="t" style="left:266.70px;top:402px;font-size:10px;color:#dedede;transform:scaleX(0.9563)">api-ms-win-core-libraryloader-l1-1-0.dll</div>
<div class="t" style="left:452.30px;top:402px;font-size:10px;color:#dedede;transform:scaleX(0.8828)">5/4/2025 4:13 PM</div>
<div class="t" style="left:564.10px;top:402px;font-size:10px;color:#dedede;transform:scaleX(0.9095)">Application extens...</div>
<div class="t" style="left:684.50px;top:402px;font-size:10px;color:#dedede;transform:scaleX(0.8404)">22 KB</div>
<div class="t" style="left:266.70px;top:424px;font-size:10px;color:#dedede;transform:scaleX(0.9589)">api-ms-win-core-localization-l1-2-0.dll</div>
<div class="t" style="left:452.30px;top:424px;font-size:10px;color:#dedede;transform:scaleX(0.8828)">5/4/2025 4:13 PM</div>
<div class="t" style="left:564.10px;top:424px;font-size:10px;color:#dedede;transform:scaleX(0.9095)">Application extens...</div>
<div class="t" style="left:684.50px;top:424px;font-size:10px;color:#dedede;transform:scaleX(0.8404)">22 KB</div>
<div class="t" style="left:266.70px;top:445px;font-size:10px;color:#dedede;transform:scaleX(0.9695)">api-ms-win-core-memory-l1-1-0.dll</div>
<div class="t" style="left:452.30px;top:445px;font-size:10px;color:#dedede;transform:scaleX(0.8828)">5/4/2025 4:13 PM</div>
<div class="t" style="left:564.10px;top:445px;font-size:10px;color:#dedede;transform:scaleX(0.9095)">Application extens...</div>
<div class="t" style="left:684.50px;top:445px;font-size:10px;color:#dedede;transform:scaleX(0.8404)">22 KB</div>
<div class="t" style="left:266.70px;top:467px;font-size:10px;color:#dedede;transform:scaleX(0.9588)">api-ms-win-core-namedpipe-l1-1-0.dll</div>
<div class="t" style="left:452.30px;top:467px;font-size:10px;color:#dedede;transform:scaleX(0.8828)">5/4/2025 4:13 PM</div>
<div class="t" style="left:564.10px;top:467px;font-size:10px;color:#dedede;transform:scaleX(0.9095)">Application extens...</div>
<div class="t" style="left:684.50px;top:467px;font-size:10px;color:#dedede;transform:scaleX(0.8404)">22 KB</div>
<div class="t" style="left:266.70px;top:489px;font-size:10px;color:#dedede;transform:scaleX(0.9432)">api-ms-win-core-processenvironment-l1...</div>
<div class="t" style="left:452.30px;top:489px;font-size:10px;color:#dedede;transform:scaleX(0.8828)">5/4/2025 4:13 PM</div>
<div class="t" style="left:564.10px;top:489px;font-size:10px;color:#dedede;transform:scaleX(0.9095)">Application extens...</div>
<div class="t" style="left:684.50px;top:489px;font-size:10px;color:#dedede;transform:scaleX(0.8404)">22 KB</div>
<div class="t" style="left:266.70px;top:510px;font-size:10px;color:#dedede;transform:scaleX(0.9403)">api-ms-win-core-processthreads-l1-1-0.dll</div>
<div class="t" style="left:452.30px;top:510px;font-size:10px;color:#dedede;transform:scaleX(0.8828)">5/4/2025 4:13 PM</div>
<div class="t" style="left:564.10px;top:510px;font-size:10px;color:#dedede;transform:scaleX(0.9095)">Application extens...</div>
<div class="t" style="left:684.50px;top:510px;font-size:10px;color:#dedede;transform:scaleX(0.8404)">22 KB</div>
<!-- red annotation rectangle -->
<div class="a" style="left:111px;top:8.7px;width:211.7px;height:56.3px;border:3px solid #e21b1c;"></div>
</body></html>
